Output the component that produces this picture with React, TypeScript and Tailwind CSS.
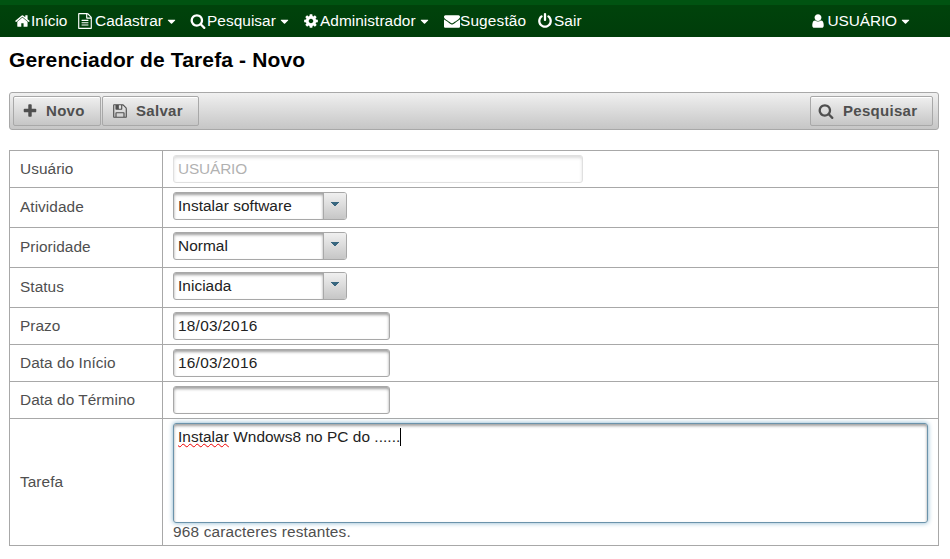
import type { ReactNode } from "react";

const ICONS = {
  home: "M1408 992v480q0 26-19 45t-45 19h-384v-384h-256v384h-384q-26 0-45-19t-19-45v-480q0-1 .5-3t.5-3l575-474 575 474q1 2 1 6zm223-69l-62 74q-8 9-21 11h-3q-13 0-21-7l-692-577-692 577q-12 8-24 7-13-2-21-11l-62-74q-8-10-7-23.5t11-21.5l719-599q32-26 76-26t76 26l244 204v-195q0-14 9-23t23-9h192q14 0 23 9t9 23v408l219 182q10 8 11 21.5t-7 23.5z",
  caret: "M1408 704q0 26-19 45l-448 448q-19 19-45 19t-45-19l-448-448q-19-19-19-45t19-45 45-19h896q26 0 45 19t19 45z",
  search: "M1216 832q0-185-131.5-316.5t-316.5-131.5-316.5 131.5-131.5 316.5 131.5 316.5 316.5 131.5 316.5-131.5 131.5-316.5zm512 832q0 52-38 90t-90 38q-54 0-90-38l-343-342q-179 124-399 124-143 0-273.5-55.5t-225-150-150-225-55.5-273.5 55.5-273.5 150-225 225-150 273.5-55.5 273.5 55.5 225 150 150 225 55.5 273.5q0 220-124 399l343 343q37 37 37 90z",
  cog: "M1152 896q0-106-75-181t-181-75-181 75-75 181 75 181 181 75 181-75 75-181zm512-109v222q0 12-8 23t-20 13l-185 28q-19 54-39 91 35 50 107 138 10 12 10 25t-9 23q-27 37-99 108t-94 71q-12 0-26-9l-138-108q-44 23-91 38-16 136-29 186-7 28-36 28h-222q-14 0-24.5-8.5t-11.5-21.5l-28-184q-49-16-90-37l-141 107q-10 9-25 9-14 0-25-11-126-114-165-168-7-10-7-23 0-12 8-23 15-21 51-66.5t54-70.5q-27-50-41-99l-183-27q-13-2-21-12.5t-8-23.5v-222q0-12 8-23t19-13l186-28q14-46 39-92-40-57-107-138-10-12-10-24 0-10 9-23 26-36 98.5-107.5t94.5-71.5q13 0 26 10l138 107q44-23 91-38 16-136 29-186 7-28 36-28h222q14 0 24.5 8.5t11.5 21.5l28 184q49 16 90 37l142-107q9-9 24-9 13 0 25 10 129 119 165 170 7 8 7 22 0 12-8 23-15 21-51 66.5t-54 70.5q26 50 41 98l183 28q13 2 21 12.5t8 23.5z",
  envelope: "M1792 710v794q0 66-47 113t-113 47h-1472q-66 0-113-47t-47-113v-794q44 49 101 87 362 246 497 345 57 42 92.5 65.5t94.5 48 110 24.5h2q51 0 110-24.5t94.5-48 92.5-65.5q170-123 498-345 57-39 100-87zm0-294q0 79-49 151t-122 123q-376 261-468 325-10 7-42.5 31t-54 38.5-52 32.5-57.5 27-50 9h-2q-23 0-50-9t-57.5-27-52-32.5-54-38.5-42.5-31q-91-64-262-182.5t-205-142.5q-62-42-117-115.5t-55-136.5q0-78 41.5-130t118.5-52h1472q65 0 112.5 47t47.5 113z",
  power: "M1664 896q0 156-61 298t-164 245-245 164-298 61-298-61-245-164-164-245-61-298q0-182 80.5-343t226.5-270q43-32 95.5-25t83.5 50q32 42 24.5 94.5t-49.5 84.5q-98 74-151.5 181t-53.5 228q0 104 40.5 198.5t109.5 163.5 163.5 109.5 198.5 40.5 198.5-40.5 163.5-109.5 109.5-163.5 40.5-198.5q0-121-53.5-228t-151.5-181q-42-32-49.5-84.5t24.5-94.5q31-43 84-50t95 25q146 109 226.5 270t80.5 343zm-640-768v640q0 52-38 90t-90 38-90-38-38-90v-640q0-52 38-90t90-38 90 38 38 90z",
  user: "M1536 1399q0 109-62.5 187t-150.5 78h-854q-88 0-150.5-78t-62.5-187q0-85 8.5-160.5t31.5-152 58.5-131 94-89 134.5-34.5q131 128 313 128t313-128q76 0 134.5 34.5t94 89 58.5 131 31.5 152 8.5 160.5zm-256-887q0 159-112.5 271.5t-271.5 112.5-271.5-112.5-112.5-271.5 112.5-271.5 271.5-112.5 271.5 112.5 112.5 271.5z",
  plus: "M1600 736v192q0 40-28 68t-68 28h-416v416q0 40-28 68t-68 28h-192q-40 0-68-28t-28-68v-416h-416q-40 0-68-28t-28-68v-192q0-40 28-68t68-28h416v-416q0-40 28-68t68-28h192q40 0 68 28t28 68v416h416q40 0 68 28t28 68z",
  floppy: "M512 1536h768v-384h-768v384zm896 0h128v-896q0-14-10-38.5t-20-34.5l-281-281q-10-10-34-20t-39-10v416q0 40-28 68t-68 28h-576q-40 0-68-28t-28-68v-416h-128v1280h128v-416q0-40 28-68t68-28h832q40 0 68 28t28 68v416zm-384-928v-320q0-13-9.5-22.5t-22.5-9.5h-192q-13 0-22.5 9.5t-9.5 22.5v320q0 13 9.5 22.5t22.5 9.5h192q13 0 22.5-9.5t9.5-22.5zm640 32v928q0 40-28 68t-68 28h-1344q-40 0-68-28t-28-68v-1344q0-40 28-68t68-28h928q40 0 88 20t76 48l280 280q28 28 48 76t20 88z",
  file: "M1596 380q28 28 48 76t20 88v1152q0 40-28 68t-68 28h-1344q-40 0-68-28t-28-68v-1600q0-40 28-68t68-28h896q40 0 88 20t76 48zm-444-244v376h376q-10-29-22-41l-313-313q-12-12-41-22zm384 1528v-1024h-416q-40 0-68-28t-28-68v-416h-768v1536h1280zm-1024-864q0-14 9-23t23-9h704q14 0 23 9t9 23v64q0 14-9 23t-23 9h-704q-14 0-23-9t-9-23v-64zm736 224q14 0 23 9t9 23v64q0 14-9 23t-23 9h-704q-14 0-23-9t-9-23v-64q0-14 9-23t23-9h704zm0 256q14 0 23 9t9 23v64q0 14-9 23t-23 9h-704q-14 0-23-9t-9-23v-64q0-14 9-23t23-9h704z",
};

type IconName = keyof typeof ICONS;

function Icon({ name, className = "size-4" }: { name: IconName; className?: string }) {
  return (
    <svg viewBox="0 0 1792 1792" fill="currentColor" className={`shrink-0 ${className}`}>
      <path d={ICONS[name]} />
    </svg>
  );
}

function NavItem({ icon, label, caret, className, iconClass, textClass = "" }: { icon: IconName; label: string; caret?: boolean; className: string; iconClass?: string; textClass?: string }) {
  return (
    <a className={`flex shrink-0 items-center whitespace-nowrap ${className}`}>
      <Icon name={icon} className={iconClass} />
      <span className={textClass}>{label}</span>
      {caret && <Icon name="caret" className="ml-0.5 size-[13px]" />}
    </a>
  );
}

function ToolButton({ icon, label, className, labelClass = "ml-2" }: { icon: IconName; label: string; className: string; labelClass?: string }) {
  return (
    <button className={`flex h-[30px] items-center rounded-[2px] border border-[#a8a8a8] bg-linear-to-b from-[#f0f0f0] to-[#c6c6c6] text-[15px] font-bold text-[#4f4f4f] shadow-[inset_0_1px_0_#fff] ${className}`}>
      <Icon name={icon} />
      <span className={`tracking-[0.3px] ${labelClass}`}>{label}</span>
    </button>
  );
}

function Row({ label, className, labelClass = "", children }: { label: string; className: string; labelClass?: string; children: ReactNode }) {
  return (
    <div className={`flex border-b border-[#a8a8a8] ${className}`}>
      <div className={`flex w-[153px] shrink-0 items-center border-r border-[#a8a8a8] pl-2.5 ${labelClass}`}>{label}</div>
      <div className="flex-1 px-2.5 pt-1">{children}</div>
    </div>
  );
}

function Field({ value, className }: { value: string; className: string }) {
  return (
    <div className={`flex h-7 items-center rounded-[3px] border border-[#a8a8a8] pl-1 text-[#222] shadow-[inset_0_2px_3px_#a0a0a0] ${className}`}>
      {value}
    </div>
  );
}

function Select({ value }: { value: string }) {
  return (
    <div className="flex h-7 w-[174px] overflow-hidden rounded-[3px] border border-[#a8a8a8] text-[#222]">
      <div className="flex flex-1 items-center pb-px pl-1 shadow-[inset_0_2px_3px_#a0a0a0]">{value}</div>
      <div className="flex w-[23px] justify-center border-l border-[#a8a8a8] bg-linear-to-b from-[#f0f0f0] to-[#c6c6c6] pt-[9px]">
        <svg viewBox="0 0 8 4" className="h-1 w-2">
          <path d="M0 0h8v1H7v1H6v1H5v1H3V3H2V2H1V1H0z" fill="#38667f" />
        </svg>
      </div>
    </div>
  );
}

export default function App() {
  return (
    <div className="h-[559px] w-[950px] overflow-hidden bg-white font-['Liberation_Sans',Arial,sans-serif] text-[15.4px] leading-[18px] tracking-[0.05px] text-[#4f4f4f]">
      <nav className="flex h-[37px] items-center border-t-[5px] border-[#005311] bg-linear-to-b from-[#00430b] to-[#003d0a] pl-[15px] text-white">
        <NavItem icon="home" label="Início" className="w-[62px]" textClass="tracking-[-0.1px]" />
        <NavItem icon="file" label="Cadastrar" caret className="w-[113px]" textClass="ml-0.5" />
        <NavItem icon="search" label="Pesquisar" caret className="w-[113px]" textClass="ml-px" />
        <NavItem icon="cog" label="Administrador" caret className="w-[141px]" textClass="ml-px" />
        <NavItem icon="envelope" label="Sugestão" className="w-[93px]" textClass="tracking-[0.15px]" />
        <NavItem icon="power" label="Sair" className="" textClass="ml-px" />
        <NavItem icon="user" label="USUÁRIO" caret className="mr-[38px] ml-auto" textClass="ml-0.5 tracking-[-0.1px]" />
      </nav>
      <main className="px-[9px]">
        <h1 className="flex h-[55px] items-start pt-[11px] text-[21px] leading-6 font-bold tracking-[0.13px] text-black">Gerenciador de Tarefa - Novo</h1>
        <div className="flex h-[38px] w-[930px] items-start rounded-[3px] border border-[#a8a8a8] bg-linear-to-b from-[#f0f0f0] to-[#c6c6c6] pt-[3px] pr-[5px] pl-[3px]">
          <ToolButton icon="plus" label="Novo" className="w-[88px] pl-2" />
          <ToolButton icon="floppy" label="Salvar" className="ml-px w-[97px] pl-[9px]" />
          <ToolButton icon="search" label="Pesquisar" className="ml-auto w-[123px] pl-[7px]" labelClass="ml-[9px]" />
        </div>
        <div className="mt-5 w-[930px] border-x border-t border-[#a8a8a8]">
          <Row label="Usuário" className="h-[37px]">
            <Field value="USUÁRIO" className="w-[410px] tracking-[-0.15px] opacity-35" />
          </Row>
          <Row label="Atividade" className="h-10" labelClass="pb-0.5"><Select value="Instalar software" /></Row>
          <Row label="Prioridade" className="h-10" labelClass="pb-0.5"><Select value="Normal" /></Row>
          <Row label="Status" className="h-10" labelClass="pb-0.5"><Select value="Iniciada" /></Row>
          <Row label="Prazo" className="h-[37px]"><Field value="18/03/2016" className="w-[217px] tracking-[0.25px]" /></Row>
          <Row label="Data do Início" className="h-[37px]"><Field value="16/03/2016" className="w-[217px] tracking-[0.25px]" /></Row>
          <Row label="Data do Término" className="h-[37px]"><Field value="" className="w-[217px]" /></Row>
          <Row label="Tarefa" className="h-[127px]">
            <div className="flex h-[100px] w-[755px] items-start rounded-[3px] border border-[#6b93ab] pt-1 pl-1 text-[#222] shadow-[0_0_5px_#85b2cb,inset_0_2px_3px_#a0a0a0]">
              <span><span className="underline decoration-[#e00] decoration-wavy decoration-1 underline-offset-1">Instalar</span> Wndows8 no PC do ......</span>
              <span className="h-[18px] w-px bg-black" />
            </div>
            <div className="tracking-[0.17px]">968 caracteres restantes.</div>
          </Row>
        </div>
      </main>
    </div>
  );
}
